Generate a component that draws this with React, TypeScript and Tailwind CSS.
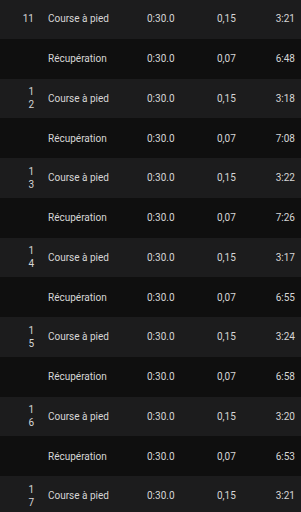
import React from "react";

type Lap = { num: string[]; name: string; time: string; dist: string; pace: string };

const laps: Lap[] = [
  { num: ["11"], name: "Course à pied", time: "0:30.0", dist: "0,15", pace: "3:21" },
  { num: [], name: "Récupération", time: "0:30.0", dist: "0,07", pace: "6:48" },
  { num: ["1", "2"], name: "Course à pied", time: "0:30.0", dist: "0,15", pace: "3:18" },
  { num: [], name: "Récupération", time: "0:30.0", dist: "0,07", pace: "7:08" },
  { num: ["1", "3"], name: "Course à pied", time: "0:30.0", dist: "0,15", pace: "3:22" },
  { num: [], name: "Récupération", time: "0:30.0", dist: "0,07", pace: "7:26" },
  { num: ["1", "4"], name: "Course à pied", time: "0:30.0", dist: "0,15", pace: "3:17" },
  { num: [], name: "Récupération", time: "0:30.0", dist: "0,07", pace: "6:55" },
  { num: ["1", "5"], name: "Course à pied", time: "0:30.0", dist: "0,15", pace: "3:24" },
  { num: [], name: "Récupération", time: "0:30.0", dist: "0,07", pace: "6:58" },
  { num: ["1", "6"], name: "Course à pied", time: "0:30.0", dist: "0,15", pace: "3:20" },
  { num: [], name: "Récupération", time: "0:30.0", dist: "0,07", pace: "6:53" },
  { num: ["1", "7"], name: "Course à pied", time: "0:30.0", dist: "0,15", pace: "3:21" },
];

export default function App() {
  return (
    <div
      className="w-[301px] h-[512px] overflow-hidden bg-[#101010] text-[10px] text-[#d6d6d6]"
      style={{ fontFamily: "Roboto, 'Liberation Sans', sans-serif" }}
    >
      <div className="-mt-[1px] flex flex-col">
        {laps.map((lap, i) => (
          <div
            key={i}
            className={`flex items-center h-[39.75px] shrink-0 ${i % 2 === 0 ? "bg-[#1c1c1d]" : "bg-[#0f0f0f]"}`}
          >
            <div className="w-[34px] flex flex-col items-end leading-[13px]">
              {lap.num.map((n, j) => (
                <span key={j}>{n}</span>
              ))}
            </div>
            <div className="w-[113px] pl-[14px]">{lap.name}</div>
            <div className="w-[70px]">{lap.time}</div>
            <div className="w-[40px]">{lap.dist}</div>
            <div className="flex-1 text-right pr-[6px]">{lap.pace}</div>
          </div>
        ))}
      </div>
    </div>
  );
}
